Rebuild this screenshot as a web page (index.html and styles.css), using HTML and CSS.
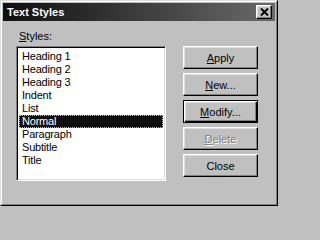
FILE: index.html
```html
<!DOCTYPE html>
<html>
<head>
<meta charset="utf-8">
<link rel="stylesheet" href="styles.css">
</head>
<body>
<div class="window">
  <div class="frame">
    <div class="titlebar">
      <span class="title">Text Styles</span>
      <span class="close-btn">
        <svg width="9" height="8" viewBox="0 0 9 8"><path d="M1 0.5L8 7.5M8 0.5L1 7.5" stroke="#000" stroke-width="1.9" fill="none"/></svg>
      </span>
    </div>
    <div class="content">
      <div class="left">
        <div class="label"><u>S</u>tyles:</div>
        <div class="listbox">
          <div class="item">Heading 1</div>
          <div class="item">Heading 2</div>
          <div class="item">Heading 3</div>
          <div class="item">Indent</div>
          <div class="item">List</div>
          <div class="item selected">Normal</div>
          <div class="item">Paragraph</div>
          <div class="item">Subtitle</div>
          <div class="item">Title</div>
        </div>
      </div>
      <div class="buttons">
        <div class="btn"><span><u>A</u>pply</span></div>
        <div class="btn"><span><u>N</u>ew...</span></div>
        <div class="btn default"><span><u>M</u>odify...</span></div>
        <div class="btn disabled"><span><u>D</u>elete</span></div>
        <div class="btn"><span>Close</span></div>
      </div>
    </div>
  </div>
</div>
</body>
</html>
```
FILE: styles.css
```css
html, body {
  margin: 0;
  padding: 0;
  background: #c0c0c0;
}
body {
  font-family: "Liberation Sans", Arial, sans-serif;
  font-size: 11px;
  line-height: 13px;
  color: #000;
}
.window {
  width: 278px;
  height: 206px;
  box-sizing: border-box;
  border: 1px solid;
  border-color: #dfdfdf #000 #000 #dfdfdf;
  background: #c0c0c0;
}
.frame {
  height: 100%;
  box-sizing: border-box;
  border: 1px solid;
  border-color: #fff #808080 #808080 #fff;
  padding: 1px;
}
.titlebar {
  height: 18px;
  background: linear-gradient(to right, #0f0f0f, #6a6a6a);
  display: flex;
  align-items: center;
  justify-content: space-between;
  padding: 0 3px 0 4px;
}
.title {
  color: #fff;
  font-weight: bold;
  font-size: 11px;
  line-height: 13px;
  padding-top: 1px;
}
.close-btn {
  width: 16px;
  height: 14px;
  box-sizing: border-box;
  background: #c0c0c0;
  border: 1px solid;
  border-color: #fff #000 #000 #fff;
  box-shadow: inset -1px -1px 0 #808080, inset 1px 1px 0 #dfdfdf;
  display: flex;
  align-items: center;
  justify-content: center;
}
.close-btn svg {
  display: block;
}
.content {
  display: flex;
  align-items: flex-start;
  padding: 9px 0 0 13px;
}
.left {
  display: flex;
  flex-direction: column;
}
.label {
  margin-left: 3px;
  margin-bottom: 3px;
}
.listbox {
  width: 150px;
  height: 135px;
  box-sizing: border-box;
  background: #fff;
  border: 1px solid;
  border-color: #808080 #fff #fff #808080;
  box-shadow: inset 1px 1px 0 #000, inset -1px -1px 0 #dfdfdf;
  padding: 3px 2px 0 2px;
}
.item {
  height: 13px;
  padding-left: 3px;
  white-space: nowrap;
  letter-spacing: -0.2px;
}
.item.selected {
  background: #0f0f0f;
  color: #fff;
  outline: 1px dotted #c0c0c0;
  outline-offset: -1px;
}
.buttons {
  display: flex;
  flex-direction: column;
  gap: 4px;
  margin-left: 17px;
  margin-top: 16px;
}
.btn {
  width: 75px;
  height: 23px;
  box-sizing: border-box;
  border: 1px solid;
  border-color: #fff #000 #000 #fff;
  box-shadow: inset -1px -1px 0 #808080, inset 1px 1px 0 #dfdfdf;
  display: flex;
  align-items: center;
  justify-content: center;
}
.btn.default {
  border: 1px solid #000;
  box-shadow: inset 1px 1px 0 #fff, inset -1px -1px 0 #000, inset -2px -2px 0 #808080, inset 2px 2px 0 #dfdfdf;
}
.btn.disabled {
  color: #808080;
  text-shadow: 1px 1px 0 #fff;
}
.btn span {
  padding-top: 1px;
}
```
